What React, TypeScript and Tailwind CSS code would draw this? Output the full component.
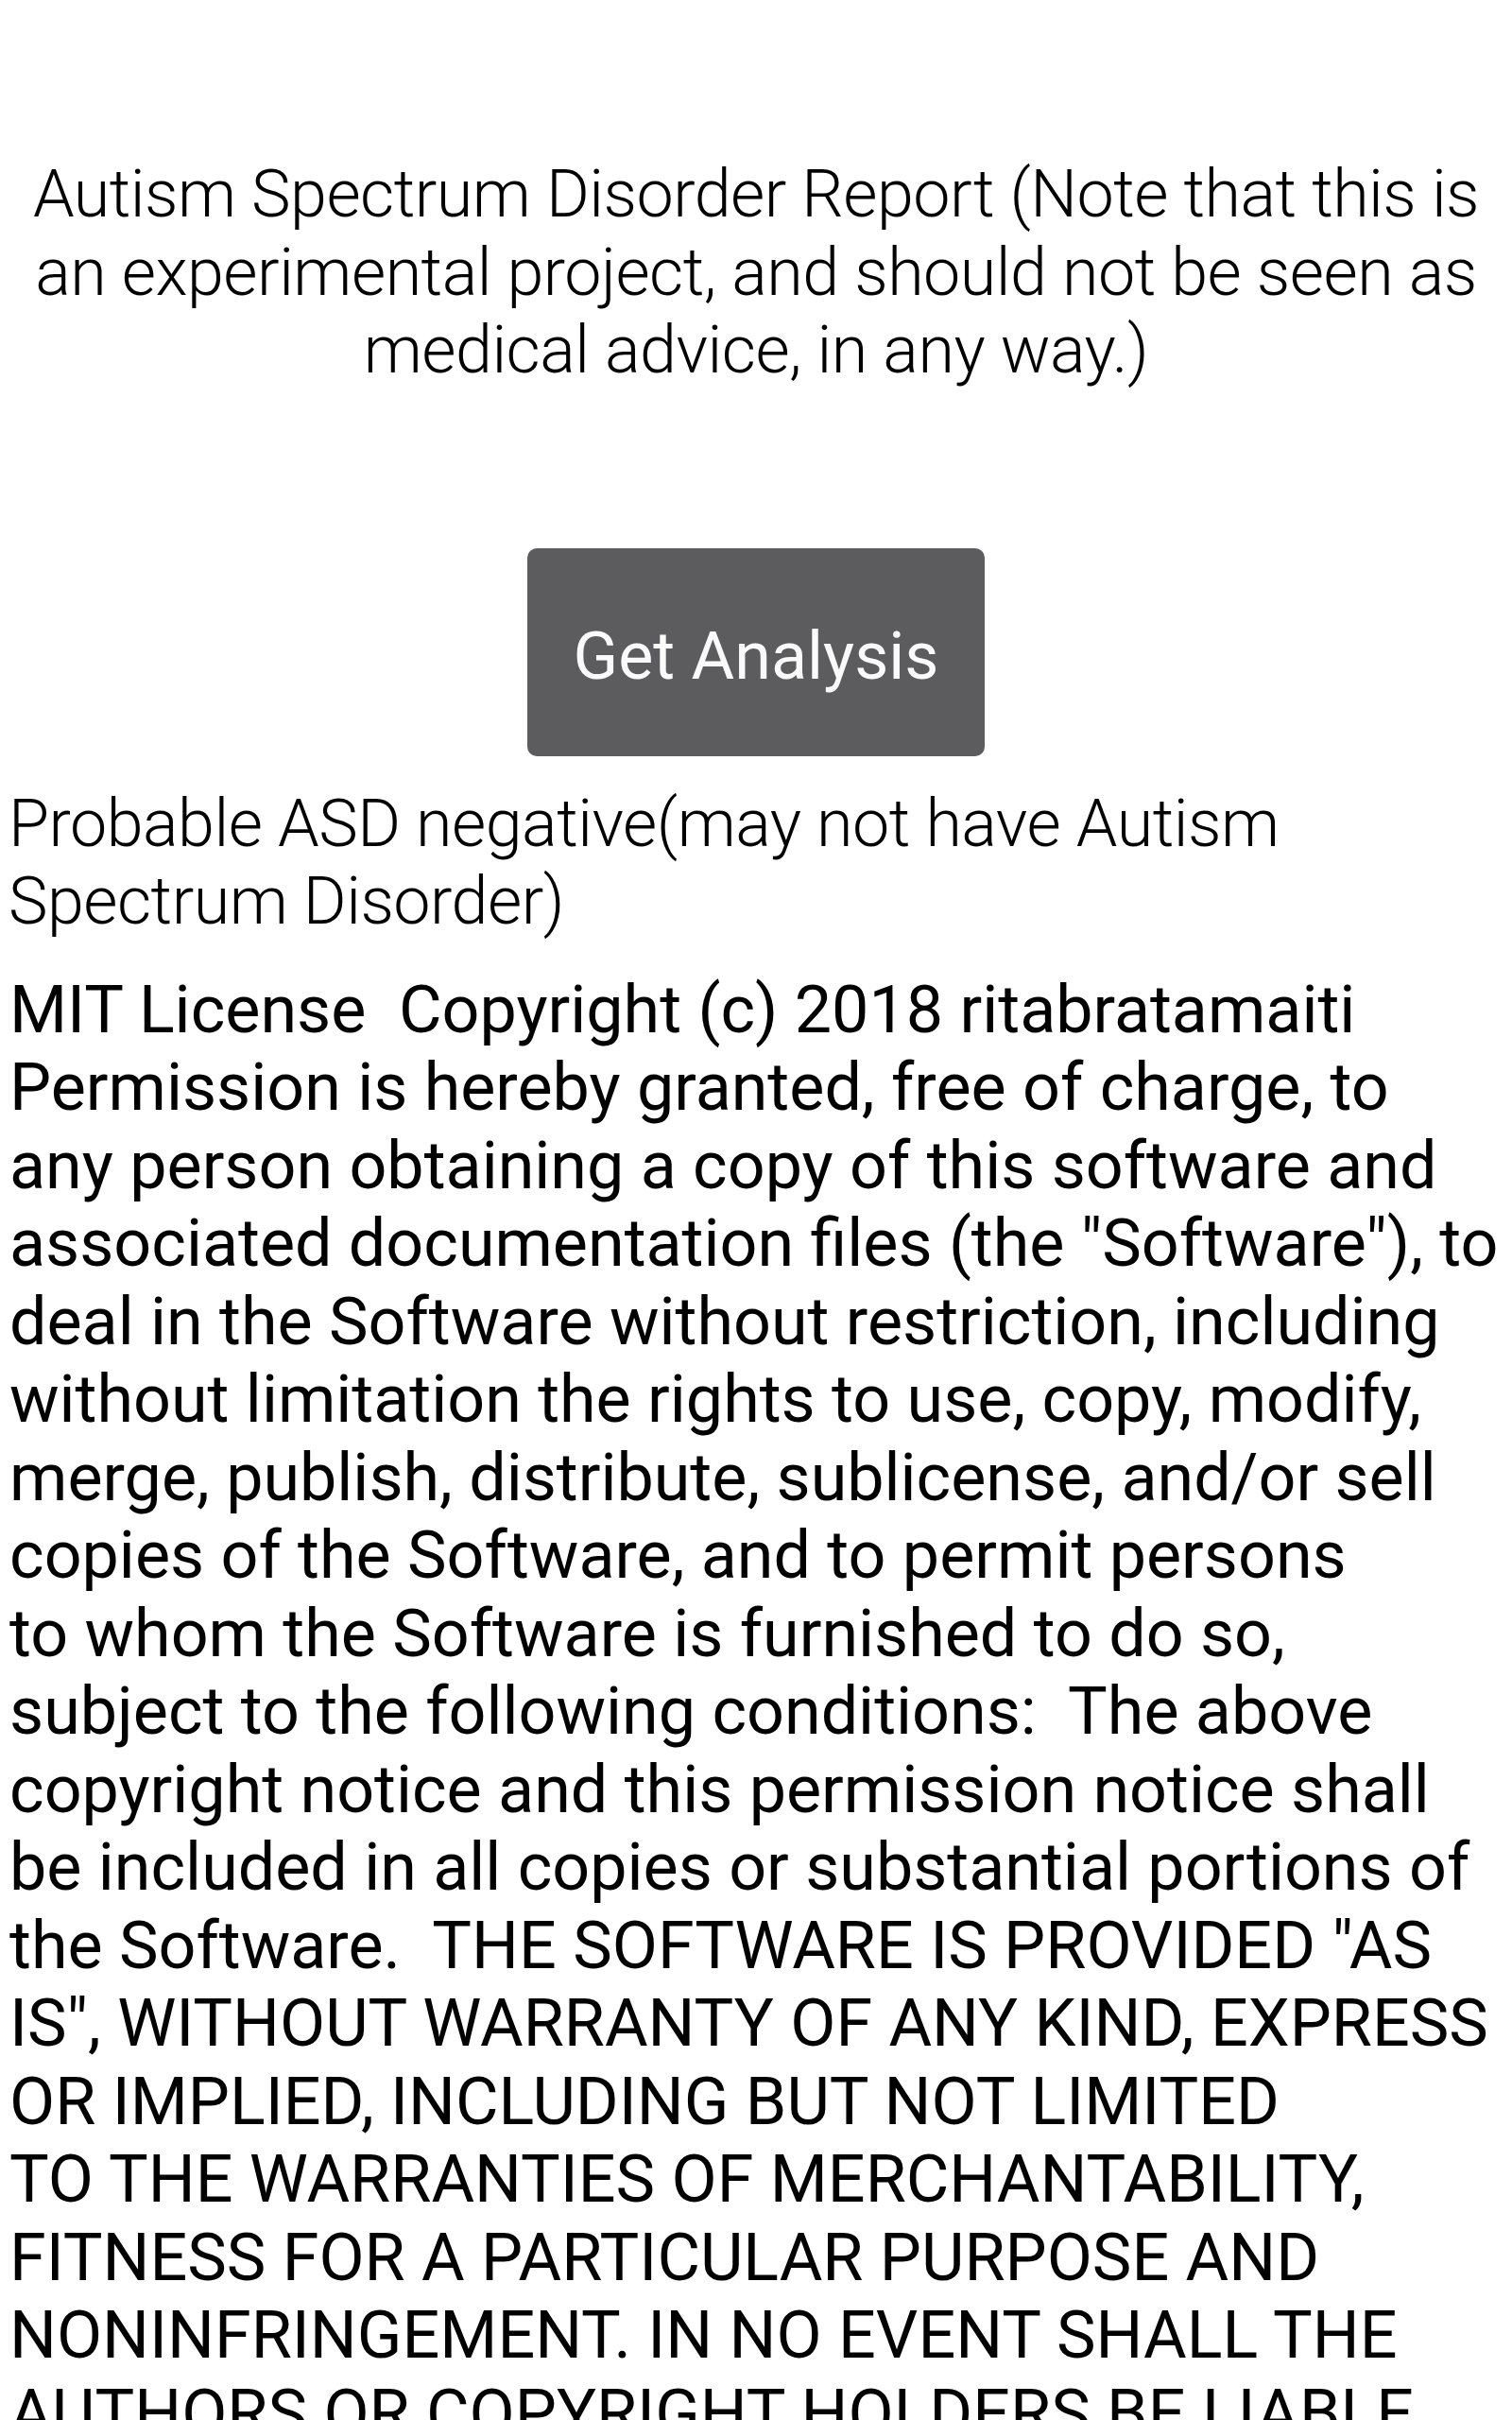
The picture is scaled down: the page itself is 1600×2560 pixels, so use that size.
import React from 'react';

const titleLines = [
    'Autism Spectrum Disorder Report (Note that this is',
    'an experimental project, and should not be seen as',
    'medical advice, in any way.)',
];

const resultLines = ['Probable ASD negative(may not have Autism', 'Spectrum Disorder)'];

// the license is broken the same way the device breaks it
const licenseLines = [
    'MIT License  Copyright (c) 2018 ritabratamaiti',
    'Permission is hereby granted, free of charge, to',
    'any person obtaining a copy of this software and',
    'associated documentation files (the "Software"), to',
    'deal in the Software without restriction, including',
    'without limitation the rights to use, copy, modify,',
    'merge, publish, distribute, sublicense, and/or sell',
    'copies of the Software, and to permit persons',
    'to whom the Software is furnished to do so,',
    'subject to the following conditions:  The above',
    'copyright notice and this permission notice shall',
    'be included in all copies or substantial portions of',
    'the Software.  THE SOFTWARE IS PROVIDED "AS',
    'IS", WITHOUT WARRANTY OF ANY KIND, EXPRESS',
    'OR IMPLIED, INCLUDING BUT NOT LIMITED',
    'TO THE WARRANTIES OF MERCHANTABILITY,',
    'FITNESS FOR A PARTICULAR PURPOSE AND',
    'NONINFRINGEMENT. IN NO EVENT SHALL THE',
    'AUTHORS OR COPYRIGHT HOLDERS BE LIABLE',
    'FOR ANY CLAIM, DAMAGES OR OTHER LIABILITY,',
];

const App: React.FC = () => {
    return (
        <div className="h-[2560px] w-[1600px] overflow-hidden bg-white font-['Roboto',sans-serif] text-black">
            <div className="pt-[164px] text-center text-[70px] font-light leading-[82.5px] tracking-[-0.5px]">
                {titleLines.map((line) => (
                    <div key={line} className="whitespace-nowrap">
                        {line}
                    </div>
                ))}
            </div>

            <div className="mt-[168px] flex justify-center">
                <button className="flex h-[220px] w-[484px] items-center justify-center rounded-[10px] bg-[#5c5c5e] pt-[10px] text-[70px] font-normal text-[#fafafa]">
                    Get Analysis
                </button>
            </div>

            <div className="mt-[30px] px-[9px] text-[70px] font-light leading-[82.5px] tracking-[-0.5px]">
                {resultLines.map((line) => (
                    <div key={line} className="whitespace-nowrap">
                        {line}
                    </div>
                ))}
            </div>

            <div className="mt-[32px] px-[10px] text-[70px] font-normal leading-[82.5px]">
                {licenseLines.map((line) => (
                    <div key={line} className="whitespace-pre">
                        {line}
                    </div>
                ))}
            </div>
        </div>
    );
};

export default App;
